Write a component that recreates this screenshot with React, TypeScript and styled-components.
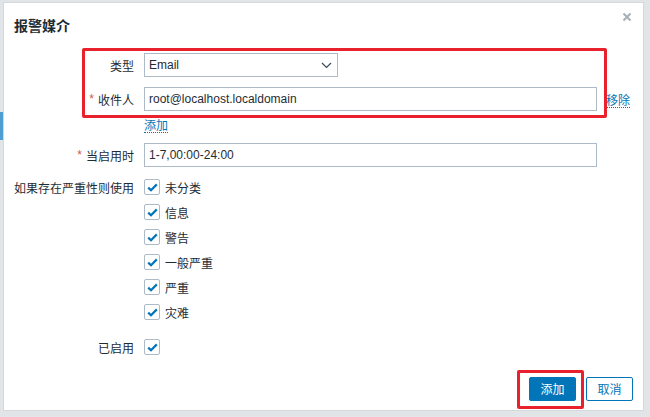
import React from "react";
import styled, { createGlobalStyle } from "styled-components";

const Global = createGlobalStyle`
  html, body { margin: 0; padding: 0; }
  body {
    width: 650px;
    height: 417px;
    overflow: hidden;
    background:
      linear-gradient(#4f9ed3, #4f9ed3) 0 112px / 4px 28px no-repeat,
      #e1e5e8;
    font-family: "Liberation Sans", Arial, "Noto Sans CJK SC", sans-serif;
    font-size: 12px;
    color: #1f2c33;
  }
`;

const Dialog = styled.div`
  position: relative;
  margin: 3px 7px 0 4px;
  width: 639px;
  height: 407px;
  background: #fff;
  box-shadow: 0 0 0 1px #d4d9dd;
  display: flex;
  flex-direction: column;
`;

const Header = styled.div`
  height: 44px;
  display: flex;
  align-items: center;
  padding: 0 10px;
  position: relative;
`;

const Title = styled.h4`
  margin: 0;
  font-size: 14px;
  font-weight: bold;
  color: #1f2c33;
  font-family: "Noto Sans CJK SC", sans-serif;
`;

const Close = styled.button`
  position: absolute;
  right: 8px;
  top: 6px;
  width: 16px;
  height: 16px;
  padding: 0;
  border: 0;
  background: transparent;
  display: flex;
  align-items: center;
  justify-content: center;
`;

const Form = styled.div`
  position: relative;
  padding: 6px 10px 0 10px;
  display: flex;
  flex-direction: column;
  flex: 1;
`;

const Row = styled.div<{ $mt?: number }>`
  display: flex;
  align-items: flex-start;
  margin-top: ${(p) => p.$mt ?? 0}px;
`;

const Label = styled.div<{ $h?: number }>`
  width: 120px;
  padding-right: 10px;
  height: ${(p) => p.$h ?? 24}px;
  display: flex;
  align-items: center;
  justify-content: flex-end;
  font-family: "Noto Sans CJK SC", sans-serif;
  font-size: 12px;
  white-space: nowrap;
  color: #1f2c33;
`;

const Req = styled.span`
  color: #d9534f;
  margin-right: 4px;
  font-family: "Liberation Sans", sans-serif;
`;

const Field = styled.div`
  display: flex;
  flex-direction: column;
`;

const Inline = styled.div`
  display: flex;
  align-items: center;
`;

const Select = styled.div`
  box-sizing: border-box;
  width: 194px;
  height: 24px;
  border: 1px solid #acbbc7;
  display: flex;
  align-items: center;
  justify-content: space-between;
  padding: 0 5px 0 4px;
  font-size: 12px;
`;

const Input = styled.div<{ $w?: number }>`
  box-sizing: border-box;
  width: ${(p) => p.$w ?? 453}px;
  height: 24px;
  border: 1px solid #acbbc7;
  display: flex;
  align-items: center;
  padding: 0 4px;
  font-size: 12px;
`;

const Link = styled.span<{ $ml?: number }>`
  color: #0275b8;
  font-family: "Noto Sans CJK SC", sans-serif;
  font-size: 12px;
  border-bottom: 1px dotted #0275b8;
  line-height: 15px;
  margin-left: ${(p) => p.$ml ?? 0}px;
`;

const RemoveLink = styled(Link)`
  margin-top: 2px;
`;

const AddLink = styled(Link)`
  margin-top: 6px;
  align-self: flex-start;
`;

const Checks = styled.div`
  display: flex;
  flex-direction: column;
  gap: 9px;
`;

const CheckRow = styled.label`
  display: flex;
  align-items: center;
  height: 16px;
  gap: 5px;
  font-family: "Noto Sans CJK SC", sans-serif;
  font-size: 12px;
`;

const Box = styled.span`
  box-sizing: border-box;
  width: 16px;
  height: 16px;
  border: 1px solid #acbbc7;
  border-radius: 2px;
  display: flex;
  align-items: center;
  justify-content: center;
  background: #fff;
`;

const Footer = styled.div`
  display: flex;
  justify-content: flex-end;
  gap: 10px;
  padding: 0 10px 9px 0;
  margin-top: auto;
`;

const Button = styled.button<{ $primary?: boolean }>`
  box-sizing: border-box;
  height: 24px;
  padding: 0 10px;
  min-width: 47px;
  border-radius: 2px;
  border: 1px solid #0275b8;
  background: ${(p) => (p.$primary ? "#0275b8" : "#fff")};
  color: ${(p) => (p.$primary ? "#fff" : "#0275b8")};
  font-family: "Noto Sans CJK SC", sans-serif;
  font-size: 12px;
  line-height: 22px;
  cursor: pointer;
`;

const Highlight = styled.div<{ $l: number; $t: number; $w: number; $h: number }>`
  position: absolute;
  left: ${(p) => p.$l}px;
  top: ${(p) => p.$t}px;
  width: ${(p) => p.$w}px;
  height: ${(p) => p.$h}px;
  box-sizing: border-box;
  border: 3px solid #e8212c;
  border-radius: 2px;
  pointer-events: none;
`;

const Check = () => (
  <Box>
    <svg width="11" height="9" viewBox="0 0 11 9">
      <path d="M1.2 4.6 L4 7.2 L9.8 1.4" fill="none" stroke="#0275b8" strokeWidth="2.2" />
    </svg>
  </Box>
);

const severities = ["未分类", "信息", "警告", "一般严重", "严重", "灾难"];

export default function App() {
  return (
    <>
      <Global />
      <Dialog>
        <Header>
          <Title>报警媒介</Title>
          <Close aria-label="close">
            <svg width="10" height="10" viewBox="0 0 10 10">
              <path d="M1.5 1.5 L8.5 8.5 M8.5 1.5 L1.5 8.5" stroke="#a5b0b8" strokeWidth="2" />
            </svg>
          </Close>
        </Header>
        <Form>
          <Row>
            <Label>类型</Label>
            <Select>
              <span>Email</span>
              <svg width="11" height="7" viewBox="0 0 11 7">
                <path d="M1 1 L5.5 5.5 L10 1" fill="none" stroke="#3b4a54" strokeWidth="1.2" />
              </svg>
            </Select>
          </Row>
          <Row $mt={10}>
            <Label>
              <Req>*</Req>收件人
            </Label>
            <Field>
              <Inline>
                <Input>root@localhost.localdomain</Input>
                <RemoveLink $ml={9}>移除</RemoveLink>
              </Inline>
              <AddLink>添加</AddLink>
            </Field>
          </Row>
          <Row $mt={10}>
            <Label>
              <Req>*</Req>当启用时
            </Label>
            <Input>1-7,00:00-24:00</Input>
          </Row>
          <Row $mt={12}>
            <Label $h={16}>如果存在严重性则使用</Label>
            <Checks>
              {severities.map((s) => (
                <CheckRow key={s}>
                  <Check />
                  {s}
                </CheckRow>
              ))}
            </Checks>
          </Row>
          <Row $mt={19}>
            <Label $h={16}>已启用</Label>
            <Check />
          </Row>
          <Highlight $l={78} $t={1} $w={525} $h={70} />
        </Form>
        <Footer>
          <Button $primary>添加</Button>
          <Button>取消</Button>
        </Footer>
        <Highlight $l={513} $t={367} $w={67} $h={39} />
      </Dialog>
    </>
  );
}
